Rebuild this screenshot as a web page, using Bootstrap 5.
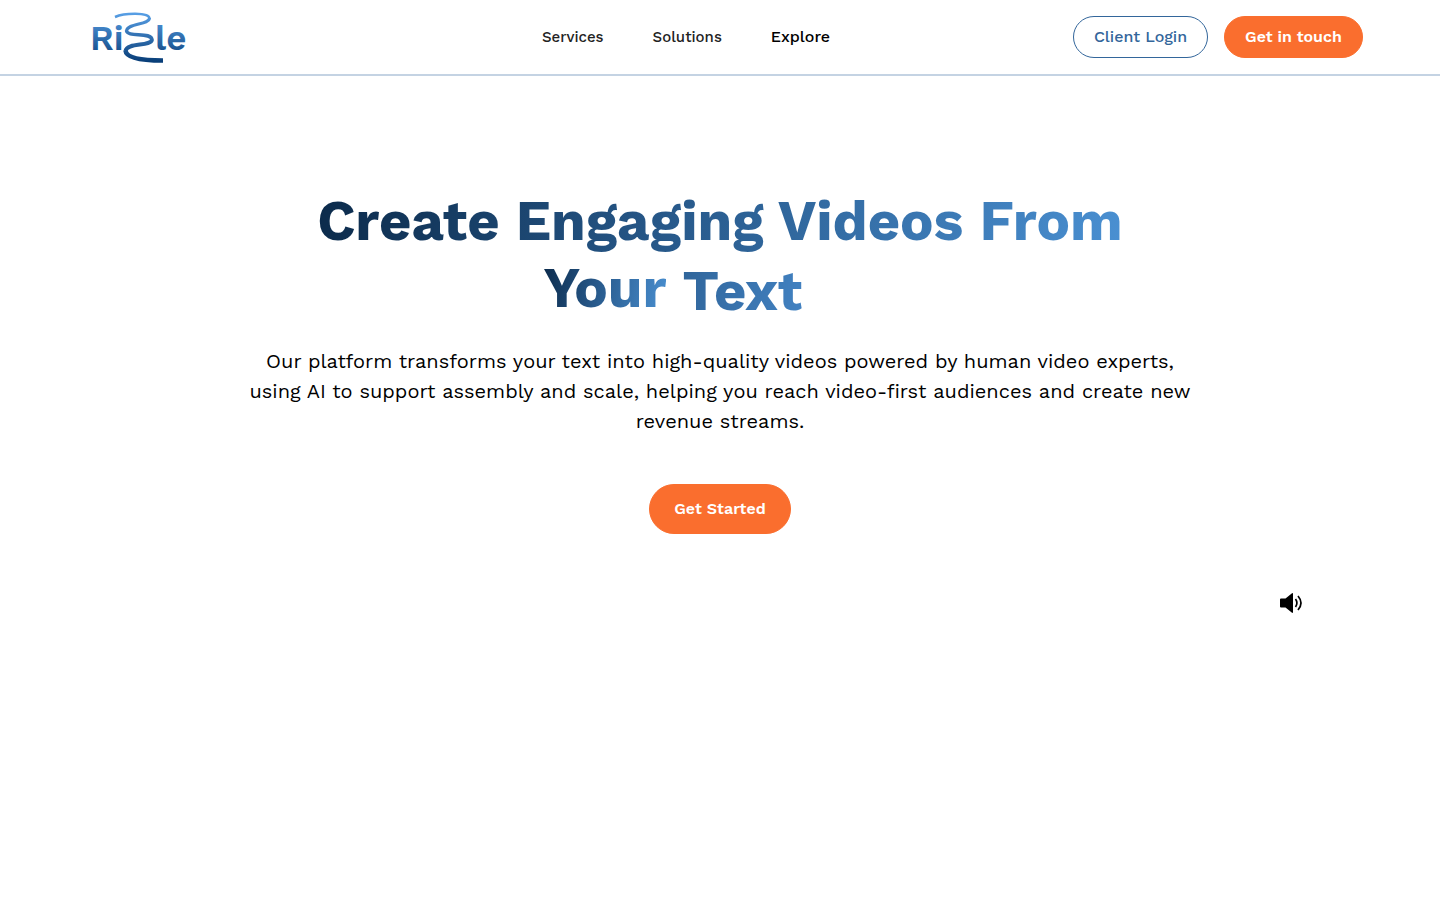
<!DOCTYPE html>
<html lang="en">
<head>
<meta charset="utf-8">
<meta name="viewport" content="width=device-width, initial-scale=1">
<title>Rizzle</title>
<link href="https://cdn.jsdelivr.net/npm/bootstrap@5.3.0/dist/css/bootstrap.min.css" rel="stylesheet">
<style>
  body { font-family: "Work Sans", Inter, sans-serif; color: #000; background: #fff; }
  .site-header { border-bottom: 2px solid #c4d3e3; padding: 0 77px 0 91px; height: 76px; }
  .side { flex: 1 1 0; }
  .main-nav { gap: 49px; margin-right: 82px; }
  .main-nav a { color: #222; font-size: 15px; font-weight: 500; text-decoration: none; }
  .main-nav a.active { color: #000; font-size: 16px; }
  .btn-login { --bs-btn-color: #33669b; --bs-btn-border-color: #33669b; width: 135px; }
  .btn-brand { --bs-btn-color: #fff; --bs-btn-bg: #fa6e2e; --bs-btn-border-color: #fa6e2e; --bs-btn-hover-bg: #e85f20; --bs-btn-hover-color: #fff; }
  .btn-pill { height: 42px; padding: 0; font-size: 16px; font-weight: 500; }
  .btn-touch { width: 139px; font-weight: 600; }
  .btn-start { width: 142px; height: 50px; padding: 0; font-size: 16px; font-weight: 600; }
  .hero { padding-top: 112px; }
  .hero h1 { font-size: 56px; line-height: 67px; font-weight: 700; margin-bottom: 18px; }
  .grad { background: linear-gradient(100deg, #0b2a4a 0%, #285a8c 45%, #4a90d2 100%); -webkit-background-clip: text; background-clip: text; color: transparent; }
  .grad-word { background: linear-gradient(100deg, #30659a, #4282c2); -webkit-background-clip: text; background-clip: text; color: transparent; }
  .typed { width: 214px; line-height: 73px; vertical-align: top; }
  .lead-copy { max-width: 960px; font-size: 20px; line-height: 30px; margin-bottom: 48px; }
  .sound { margin: 58px 137px 0 0; }
</style>
</head>
<body>
<header class="site-header d-flex align-items-center">
  <div class="side d-flex">
    <a href="#" aria-label="Rizzle home">
      <svg class="d-block" width="96" height="52" viewBox="0 0 96 52">
        <defs><linearGradient id="ink" gradientUnits="userSpaceOnUse" x1="0" y1="0" x2="0" y2="52"><stop offset="0" stop-color="#5ba3ea"/><stop offset="1" stop-color="#063b75"/></linearGradient></defs>
        <g fill="url(#ink)" font-family="Work Sans, sans-serif" font-weight="600" font-size="35"><text x="-1" y="39">Ri</text><text x="64" y="39">le</text></g>
        <g fill="none" stroke="url(#ink)">
          <path stroke-width="2.500" d="M24 6C33 2 58 1 58.500 7.500"/>
          <path stroke-width="3" d="M58.500 7C58.500 14 36 12 35.500 20"/>
          <path stroke-width="3.500" d="M35.500 19.500C36 27 61 20 61 29"/>
          <path stroke-width="4" d="M61 28.500C60 36 36 31 34.500 40"/>
          <path stroke-width="4.500" d="M34.500 39.500C35 47 50 49.500 72 49.500"/>
        </g>
      </svg>
    </a>
  </div>
  <nav class="main-nav d-flex align-items-center"><a href="#">Services</a><a href="#">Solutions</a><a href="#" class="active">Explore</a></nav>
  <div class="side d-flex justify-content-end gap-3">
    <button type="button" class="btn btn-login btn-pill rounded-pill">Client Login</button>
    <button type="button" class="btn btn-brand btn-pill btn-touch rounded-pill">Get in touch</button>
  </div>
</header>
<main class="hero text-center">
  <h1><span class="grad d-inline-block">Create Engaging Videos From</span><br><span class="grad d-inline-block">Your</span> <span class="typed d-inline-block text-start"><span class="grad-word">Text</span></span></h1>
  <p class="lead-copy mx-auto">Our platform transforms your text into high-quality videos powered by human video experts, using AI to support assembly and scale, helping you reach video-first audiences and create new revenue streams.</p>
  <button type="button" class="btn btn-brand btn-start rounded-pill">Get Started</button>
  <div class="sound d-flex justify-content-end">
    <svg width="24" height="22" viewBox="0 0 24 22" role="img" aria-label="Sound on"><path d="M2 6.500h4.500L13 1.300q1-.6 1 .6v18.200q0 1.200-1 .6L6.500 15.500H2q-1 0-1-1v-7q0-1 1-1z"/><path d="M16.500 7q2.800 4 0 8M19 4q6 7 0 14" fill="none" stroke="#000" stroke-width="1.700"/></svg>
  </div>
</main>
<script src="https://cdn.jsdelivr.net/npm/bootstrap@5.3.0/dist/js/bootstrap.bundle.min.js"></script>
</body>
</html>
